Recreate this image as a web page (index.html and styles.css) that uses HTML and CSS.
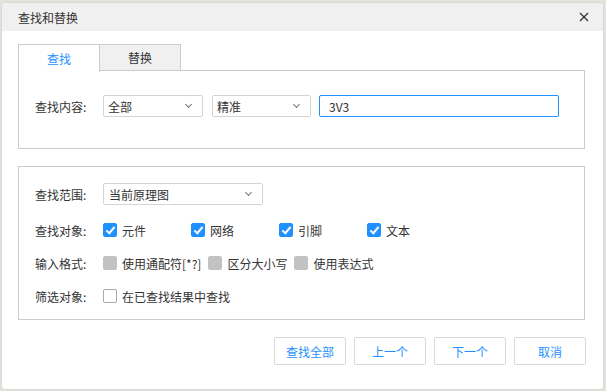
FILE: index.html
```html
<!DOCTYPE html>
<html>
<head>
	<meta charset="utf-8">
	<title>查找和替换</title>
	<link rel="stylesheet" href="styles.css">
</head>
<body>
	<div class="dialog">
		<div class="titlebar">
			<span class="title">查找和替换</span>
			<svg class="close" width="10" height="10" viewBox="0 0 10 10">
				<path d="M1 1 L9 9 M9 1 L1 9" stroke="#333" stroke-width="1.3" fill="none"/>
			</svg>
		</div>
		<div class="content">
			<div class="tabs">
				<div class="tab active">查找</div>
				<div class="tab">替换</div>
				<div class="tab-fill"></div>
			</div>
			<div class="panel panel-find">
				<div class="row">
					<span class="label">查找内容:</span>
					<div class="select sel-a"><span>全部</span><i class="chev"></i></div>
					<div class="select sel-b"><span>精准</span><i class="chev"></i></div>
					<div class="textbox">3V3</div>
				</div>
			</div>

			<div class="panel panel-opts">
				<div class="row">
					<span class="label">查找范围:</span>
					<div class="select sel-range"><span>当前原理图</span><i class="chev"></i></div>
				</div>
				<div class="row">
					<span class="label">查找对象:</span>
					<div class="checks cols">
						<label class="check"><span class="box on"></span>元件</label>
						<label class="check"><span class="box on"></span>网络</label>
						<label class="check"><span class="box on"></span>引脚</label>
						<label class="check"><span class="box on"></span>文本</label>
					</div>
				</div>
				<div class="row">
					<span class="label">输入格式:</span>
					<div class="checks">
						<label class="check"><span class="box off"></span>使用通配符[*?]</label>
						<label class="check"><span class="box off"></span>区分大小写</label>
						<label class="check"><span class="box off"></span>使用表达式</label>
					</div>
				</div>
				<div class="row">
					<span class="label">筛选对象:</span>
					<div class="checks">
						<label class="check"><span class="box"></span>在已查找结果中查找</label>
					</div>
				</div>
			</div>

			<div class="buttons">
				<button>查找全部</button>
				<button>上一个</button>
				<button>下一个</button>
				<button>取消</button>
			</div>
		</div>
	</div>
</body>
</html>
```

FILE: styles.css
```css
body {
	margin: 0;
	padding: 3px 3px 2px 2px;
	background-color: #e3e3de;
	font-family: "Noto Sans CJK SC", "Noto Sans", sans-serif;
	font-size: 12px;
	color: #333333;
}

.dialog {
	width: 601px;
	height: 386px;
	background-color: #ffffff;
	border-radius: 3px;
	box-shadow: 0 0 2px rgba(0, 0, 0, 0.15);
	overflow: hidden;
}

.titlebar {
	height: 28px;
	background-color: #f0f0f0;
	display: flex;
	align-items: center;
	justify-content: space-between;
	padding: 0 14px 0 16px;
}

.close {
	display: block;
}

.content {
	padding: 13px 18px 0 16px;
}

.tabs {
	display: flex;
	height: 27px;
}

.tab {
	width: 80px;
	height: 26px;
	border: 1px solid #cccccc;
	border-bottom: none;
	background-color: #f0f0f0;
	display: flex;
	align-items: center;
	justify-content: center;
	line-height: 1;
}

.tab + .tab {
	border-left: none;
	border-bottom: 1px solid #cccccc;
	height: 25px;
}

.tab.active {
	background-color: #ffffff;
	color: #1e90ff;
	height: 27px;
}

.tab-fill {
	flex: 1;
	align-self: flex-end;
	border-top: 1px solid #cccccc;
	border-right: 1px solid #cccccc;
	height: 0;
}

.panel {
	border: 1px solid #cccccc;
}

.panel-find {
	border-top: none;
	height: 78px;
	padding: 24px 16px 0 16px;
	box-sizing: border-box;
}

.panel-opts {
	margin-top: 17px;
	height: 154px;
	box-sizing: border-box;
	padding: 16px 16px 0 16px;
	display: flex;
	flex-direction: column;
	gap: 11px;
}

.panel-opts .row:first-child {
	margin-bottom: 3px;
}

.row {
	display: flex;
	align-items: center;
	height: 22px;
}

.label {
	width: 68px;
	flex: none;
}

.select {
	height: 22px;
	box-sizing: border-box;
	border: 1px solid #d4d4d4;
	border-radius: 2px;
	display: flex;
	align-items: center;
	justify-content: space-between;
	padding: 0 11px 0 4px;
}

.sel-a {
	width: 100px;
	margin-right: 9px;
}

.sel-b {
	width: 99px;
	margin-right: 8px;
}

.sel-range {
	width: 160px;
	padding-left: 5px;
}

.chev {
	width: 4px;
	height: 4px;
	border-right: 1px solid #777777;
	border-bottom: 1px solid #777777;
	transform: rotate(45deg);
	margin-top: -3px;
}

.textbox {
	width: 240px;
	height: 22px;
	box-sizing: border-box;
	border: 1px solid #1e90ff;
	border-radius: 2px;
	padding-left: 9px;
	display: flex;
	align-items: center;
}

.checks {
	display: flex;
	gap: 7px;
}

.checks.cols {
	gap: 0;
}

.checks.cols .check {
	width: 88px;
}

.check {
	display: flex;
	align-items: center;
	gap: 5px;
}

.box {
	width: 14px;
	height: 14px;
	box-sizing: border-box;
	border: 1px solid #a8a8a8;
	border-radius: 2px;
	background-color: #ffffff;
	position: relative;
}

.box.off {
	background-color: #c2c2c2;
	border-color: #c2c2c2;
}

.box.on {
	background-color: #1e90ff;
	border-color: #1e90ff;
}

.box.on::after {
	content: "";
	position: absolute;
	left: 4px;
	top: 1px;
	width: 3px;
	height: 7px;
	border-right: 2px solid #ffffff;
	border-bottom: 2px solid #ffffff;
	transform: rotate(40deg);
}

.buttons {
	display: flex;
	justify-content: flex-end;
	gap: 8px;
	margin-top: 17px;
	margin-right: -1px;
}

button {
	width: 72px;
	height: 28px;
	border: 1px solid #d9d9d9;
	border-radius: 2px;
	background-color: #ffffff;
	color: #1e90ff;
	font-family: "Noto Sans CJK SC", "Noto Sans", sans-serif;
	font-size: 12px;
	padding: 0;
}
```
